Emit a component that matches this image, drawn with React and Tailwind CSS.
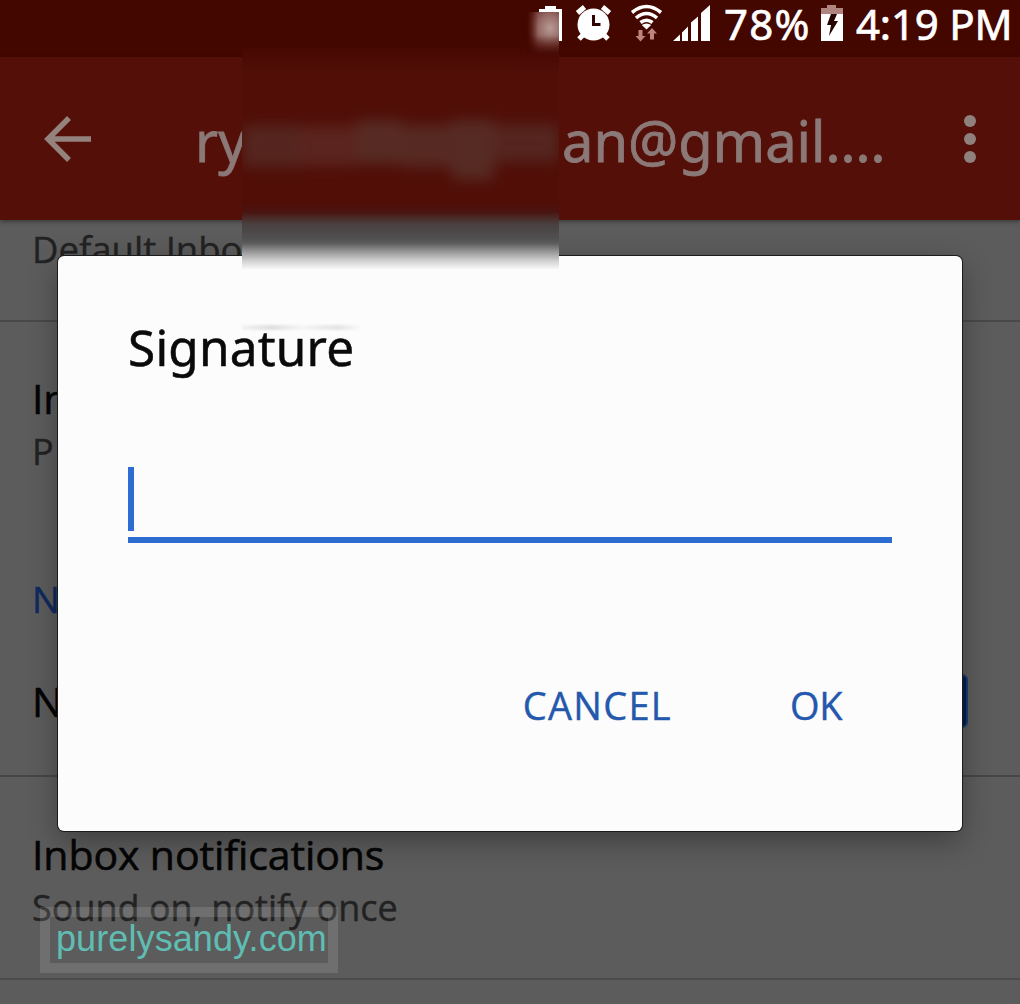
import { useState } from 'react';

const StatusIcons = () => (
  <svg width="182" height="44" viewBox="532 0 182 44" fill="white">
    {/* battery outline */}
    <path d="M539 9h6V6h11v3h6v32h-3.500V12H539z" />

    {/* alarm */}
    <circle cx="593.5" cy="24.500" r="16" />
    <g stroke="white" strokeWidth="5" fill="none">
      <path d="M577.5 13l7-6M609.5 13l-7-6" />
      <path d="M583 35l-4 4M604 35l4 4" />
    </g>
    <path d="M593.5 15v9.5h7" stroke="#300400" strokeWidth="3" fill="none" />

    {/* wifi */}
    <g stroke="white" strokeWidth="3.6" fill="none">
      <path d="M632 12.5q14.500-12 29 0" />
      <path d="M636 18q10.500-9 21 0" />
      <path d="M640.500 22.500q6-4.500 12 0" />
    </g>
    <path d="M641.800 25q4.700-3 9.400 0l-4.700 4.500z" />
    <path d="M638.500 30h4v6h3l-5 5.500-5-5.500h3zM650 39.500h4v-6h3l-5-5.500-5 5.500h3z" fill="#bd8580" />

    {/* signal */}
    <path d="M673 41l7-6.500V41zM682 32.500l6-6V41h-6zM691 22.500l7-6V41h-7zM701 13l9-8v36h-9z" />
  </svg>
);

const ChargingBattery = () => (
  <svg width="24" height="38" viewBox="0 0 24 38">
    <path d="M1 5h6V2h9v3h7v8H1z" fill="#b08580" />
    <path d="M1 11h22v27H1z" fill="white" />
    <path d="M11 11h6l-3 7h4L9 33l2-11H7z" fill="#250300" />
  </svg>
);

const StatusBar = () => (
  <div className="h-[57px] shrink-0 bg-[#430700] text-white flex items-start pl-[532px] font-['Noto_Sans'] leading-[48px] text-[42px] whitespace-nowrap [-webkit-text-stroke:0.7px_white]">
    <StatusIcons />
    <span className="ml-[10px] w-[96px] tracking-[1.2px]">78%</span>
    <div className="pt-[3px] w-[36px]"><ChargingBattery /></div>
    <span className="tracking-[-0.2px]">4:19 PM</span>
  </div>
);

const Toolbar = () => (
  <div className="h-[163px] shrink-0 bg-[#550f09] text-[#8b7977] flex items-center pl-[44px] shadow-[0_2px_4px_rgba(0,0,0,0.35)] font-['Noto_Sans']">
    <svg width="48" height="48" viewBox="0 0 48 48" fill="none" stroke="#94827e" strokeWidth="5.500">
      <path d="M25 3L4 24l21 21M4 24h43" />
    </svg>
    <div className="ml-[103px] mt-[2px] flex w-[727px] text-[56px] leading-[56px] whitespace-nowrap [-webkit-text-stroke:0.8px_#8b7977]">
      <span className="w-[367px]">ry</span>
      <span>an@gmail....</span>
    </div>
    <svg width="14" height="50" viewBox="0 0 14 50" fill="#8f817e" className="ml-[41px]">
      <circle cx="7" cy="7" r="6" />
      <circle cx="7" cy="25" r="6" />
      <circle cx="7" cy="43" r="6" />
    </svg>
  </div>
);

const Row = ({ title, subtitle }) => (
  <>
    <div className="text-[41px] leading-[50px] tracking-[-0.1px] text-[#050505] [-webkit-text-stroke:0.6px_#050505]">{title}</div>
    {subtitle && <div className="mt-[7px] text-[36px] leading-[44px] text-[#222] [-webkit-text-stroke:0.4px_#222]">{subtitle}</div>}
  </>
);

const Settings = () => (
  <div className="flex-1 font-['Open_Sans'] whitespace-nowrap">
    <div className="h-[102px] pl-[32px] pt-[7px] border-b-2 border-[#494949] text-[36.5px] leading-[44px] text-[#222] [-webkit-text-stroke:0.4px_#222]">
      Default Inbox
    </div>
    <div className="h-[455px] pl-[32px] pt-[51px] border-b-2 border-[#464646] flex flex-col">
      <Row title="In" subtitle="P" />
      <div className="mt-[103px] text-[37px] leading-[44px] text-[#102a5e] [-webkit-text-stroke:0.5px_#102a5e]">N</div>
      <div className="mt-[53px] flex items-center justify-between pr-[52px]">
        <div><Row title="N" /></div>
        <span className="w-[54px] h-[54px] rounded-[6px] bg-[#04204f] border-2 border-[#173c70]" />
      </div>
    </div>
    <div className="h-[203px] pl-[32px] pt-[52px] border-b-2 border-[#4b4b4b]">
      <Row title="Inbox notifications" subtitle="Sound on, notify once" />
    </div>
  </div>
);

// hides the middle of the address and the first status icon
const Smudge = () => (
  <>
    <div className="absolute left-[242px] top-[44px] w-[317px] h-[226px] overflow-hidden bg-[linear-gradient(180deg,#430700_0px,#4b0b04_14px,#500e07_28px,#500e07_158px,#4a1410_168px,#494040_180px,#505050_194px,#5a5a5a_199px,#929292_207px,#d2d2d2_217px,#fcfcfc_226px)]">
      <div className="mt-[76px] h-[52px] w-full flex blur-[7px] opacity-70">
        <div className="w-[60px] h-[42px] mt-[5px] bg-[#573029]" />
        <div className="w-[54px] h-[40px] mt-[6px] bg-[#602e28]" />
        <div className="w-[46px] h-[44px] bg-[#5a382f]" />
        <div className="w-[50px] h-[42px] mt-[5px] bg-[#59362e]" />
        <div className="w-[42px] h-[60px] bg-[#59382f]" />
        <div className="w-[65px] h-[38px] mt-[4px] bg-[#573029]" />
      </div>
    </div>
    <div className="absolute left-[527px] top-[12px] w-[32px] h-[42px] bg-[linear-gradient(90deg,#430700,transparent_35%),linear-gradient(0deg,#470a04,transparent_45%),radial-gradient(ellipse_at_72%_38%,#b99a96_0%,#966b66_35%,#6c3029_70%,#4f1009_100%)]" />
  </>
);

const SignatureDialog = () => {
  const [value, setValue] = useState('');

  return (
    <div className="absolute left-[58px] top-[256px] w-[904px] h-[575px] rounded-[6px] bg-[#fcfcfc] pl-[70px] pr-[70px] flex flex-col shadow-[0_0_0_1px_#1c1c1c,0_10px_30px_rgba(0,0,0,0.32)] font-['Noto_Sans']">
      <h2 className="mt-[63px] text-[49.5px] leading-[56px] tracking-[0.2px] text-[#0a0a0a] [-webkit-text-stroke:0.5px_#0a0a0a]">Signature</h2>
      <div className="mt-[92px] h-[76px] border-b-[6px] border-[#2d6cd0] flex items-start">
        <span className="w-[6px] h-[64px] bg-[#2d6cd0]" />
        <input
          className="flex-1 h-[64px] text-4xl outline-none bg-transparent caret-transparent"
          value={value}
          onChange={(e) => setValue(e.target.value)}
        />
      </div>
      <div className="mt-[137px] flex justify-end pr-[50px] gap-[118px] text-[38px] leading-[50px] text-[#2458ac] font-['Open_Sans'] [-webkit-text-stroke:0.4px_#2458ac]">
        <button className="tracking-[1.3px]">CANCEL</button>
        <button className="tracking-[-0.4px]">OK</button>
      </div>
    </div>
  );
};

export default function App() {
  return (
    <div className="relative w-[1020px] h-[1004px] overflow-hidden bg-[#5c5c5c] flex flex-col">
      <StatusBar />
      <Toolbar />
      <Settings />
      <SignatureDialog />
      <Smudge />
      <div className="absolute left-[242px] top-[325px] w-[120px] h-[5px] bg-[linear-gradient(90deg,#eee,#ccc_25%,#f2f2f2_50%,#d4d4d4_80%,transparent)] blur-[1px] opacity-60" />

      {/* Watermark */}
      <div className="absolute left-[40px] top-[907px] w-[298px] h-[66px] border-[10px] border-white/12 pl-[6px] font-['Liberation_Sans'] text-[36px] leading-[44px] tracking-[0.1px] text-[#5fbdb3] whitespace-nowrap">
        purelysandy.com
      </div>
    </div>
  );
}
